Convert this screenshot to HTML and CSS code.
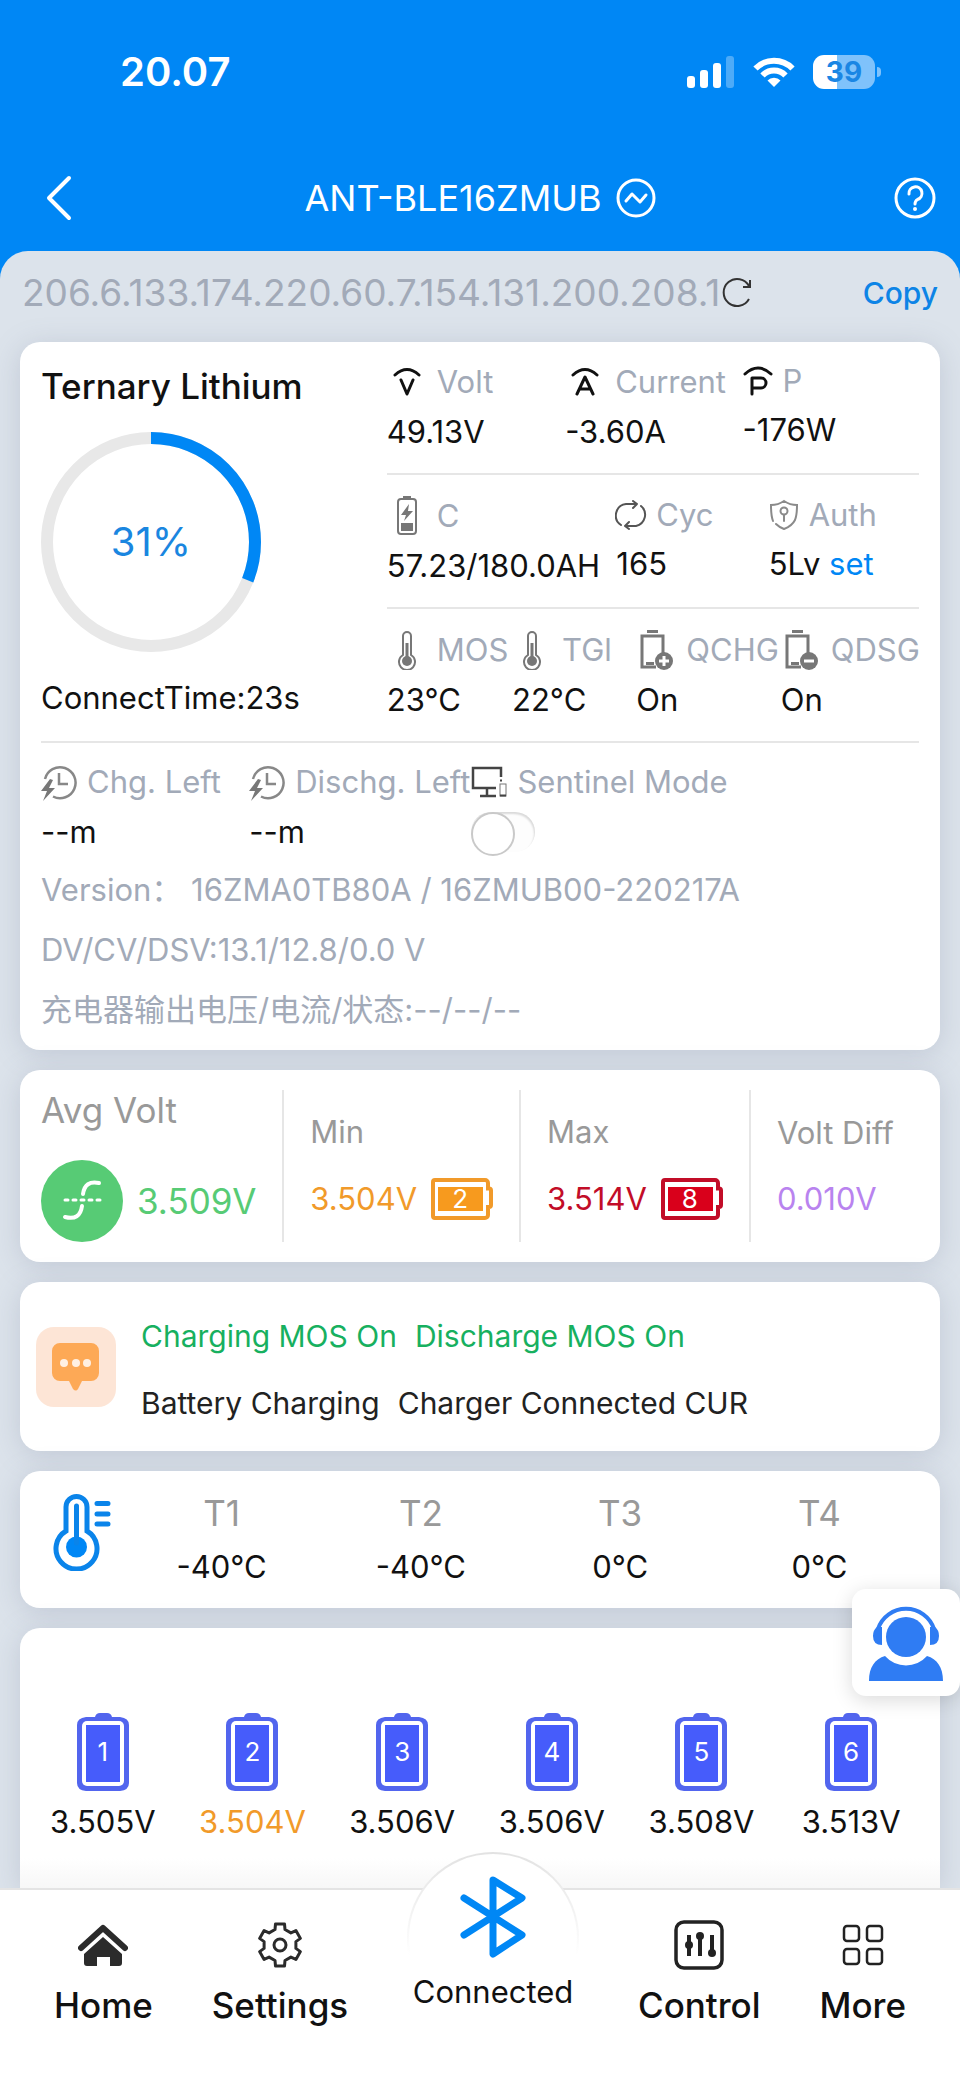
FILE: index.html
```html
<!DOCTYPE html>
<html lang="en">
<head>
<meta charset="utf-8">
<meta name="viewport" content="width=device-width, initial-scale=1">
<title>ANT-BLE16ZMUB</title>
<link rel="stylesheet" href="styles.css">
</head>
<body>
<svg class="defs" aria-hidden="true">
  <symbol id="thermo" viewBox="0 0 20 40">
    <path d="M6 25V6a4 4 0 0 1 8 0v19a8 8 0 1 1-8 0z" fill="none" stroke="#777" stroke-width="2"/>
    <circle cx="10" cy="31" r="5" fill="#777"/><path d="M10 31V13" stroke="#777" stroke-width="3"/>
  </symbol>
  <symbol id="clock" viewBox="0 0 36 36">
    <path d="M4 15A15.500 15.500 0 1 1 12 32.500" fill="none" stroke="#888" stroke-width="2.500"/>
    <path d="M18 9v11h9" fill="none" stroke="#888" stroke-width="2.500"/>
    <path d="M9 15L0 27h6L2 37 14 24H8L12 16z" fill="#777"/>
  </symbol>
  <symbol id="cell" viewBox="0 0 52 78">
    <path d="M18 4Q19 0 23 0H30Q34 0 35 4H43Q52 5 52 12V70Q52 77 43 78H9Q0 77 0 70V12Q0 5 9 4z" fill="#5265ee"/>
    <rect x="5" y="8" width="42" height="65" rx="5" fill="#fff"/>
    <rect x="9" y="12" width="34" height="57" fill="#465cfb"/>
  </symbol>
  <symbol id="flat-cell" viewBox="0 0 62 42">
    <path d="M4 2H54a3 3 0 0 1 3 3V10.500H58a2 2 0 0 1 2 2V27a2 2 0 0 1-2 2H57V37a3 3 0 0 1-3 3H4a2 2 0 0 1-2-2V4a2 2 0 0 1 2-2z" fill="#fff" stroke="currentColor" stroke-width="4"/>
    <rect class="flat-fill" x="7" y="9" width="45" height="24"/>
  </symbol>
</svg>

<div class="app">
  <header class="header">
    <div class="status">
      <span class="time">20.07</span>
      <div class="status-icons">
        <svg width="48" height="32" viewBox="0 0 48 32" fill="#fff"><rect x="0" y="20" width="8" height="12" rx="3"/><rect x="13" y="14" width="8" height="18" rx="3"/><rect x="26" y="7" width="8" height="25" rx="3"/><rect x="39" y="0" width="8" height="32" rx="3" opacity=".3"/></svg>
        <svg width="42" height="32" viewBox="0 0 42 32" fill="none" stroke="#fff" stroke-width="6"><path d="M2.500 12.500A26 26 0 0 1 39.500 12.500"/><path d="M9.500 19.500A16 16 0 0 1 32.500 19.500"/><path d="M21 31L14.500 24.500A9 9 0 0 1 27.500 24.500z" fill="#fff" stroke="none"/></svg>
        <div class="battery"><span class="battery-level">39</span></div>
      </div>
    </div>
    <div class="titlebar">
      <button class="icon-btn start" aria-label="Back"><svg width="28" height="46" viewBox="0 0 28 46"><path d="M25 3L5 23L25 43" fill="none" stroke="#fff" stroke-width="4" stroke-linecap="round" stroke-linejoin="round"/></svg></button>
      <h1 class="title">ANT-BLE16ZMUB
        <svg width="40" height="40" viewBox="0 0 40 40" fill="none" stroke="#fff" stroke-width="3"><circle cx="20" cy="20" r="18"/><path d="M10 23L16 16L24 24L30 17" stroke-linecap="round" stroke-linejoin="round"/></svg></h1>
      <button class="icon-btn end" aria-label="Help"><svg width="42" height="42" viewBox="0 0 42 42" fill="none" stroke="#fff" stroke-width="3"><circle cx="21" cy="21" r="19"/><path d="M15 17A6.500 6.500 0 1 1 23.500 22.500Q21 24 21 27" stroke-linecap="round"/><circle cx="21" cy="32" r="2" fill="#fff" stroke="none"/></svg></button>
    </div>
  </header>

  <main class="panel">
    <div class="device-id">
      <span class="id-text">206.6.133.174.220.60.7.154.131.200.208.1</span>
      <button class="icon-btn" aria-label="Refresh"><svg width="34" height="32" viewBox="0 0 34 32"><path d="M29 22A13.500 13.500 0 1 1 29 9M30 3V10H23" fill="none" stroke="#333" stroke-width="2"/></svg></button>
      <button class="copy">Copy</button>
    </div>

    <section class="card overview">
      <div class="top">
        <div class="charge">
          <h2 class="heading">Ternary Lithium</h2>
          <div class="ring">
            <svg width="220" height="220" viewBox="0 0 220 220" fill="none" stroke-width="12"><circle cx="110" cy="110" r="104" stroke="#e8e8e8"/><circle cx="110" cy="110" r="104" stroke="#0087f5" pathLength="100" stroke-dasharray="31 69" transform="rotate(-90 110 110)"/></svg>
            <span class="percent">31%</span>
          </div>
          <p class="value">ConnectTime:23s</p>
        </div>
        <div class="metrics">
          <div class="row row-a">
            <div class="metric"><div class="label"><span class="ico"><svg width="30" height="30" viewBox="0 0 30 30" fill="none" stroke="#111" stroke-width="3" stroke-linecap="round" stroke-linejoin="round"><path d="M3 8Q15-3 27 8M9 13L15 27L21 13"/></svg></span>Volt</div><div class="value">49.13V</div></div>
            <div class="metric"><div class="label"><span class="ico"><svg width="30" height="30" viewBox="0 0 30 30" fill="none" stroke="#111" stroke-width="3" stroke-linecap="round" stroke-linejoin="round"><path d="M3 8Q15-3 27 8M7 27L15 10L23 27M10 22H20"/></svg></span>Current</div><div class="value">-3.60A</div></div>
            <div class="metric compact"><div class="label"><span class="ico"><svg width="30" height="30" viewBox="0 0 30 30" fill="none" stroke="#111" stroke-width="3" stroke-linecap="round" stroke-linejoin="round"><path d="M2 8Q15-4 28 8M9 28V12H18A5 5 0 0 1 18 22H9"/></svg></span>P</div><div class="value">-176W</div></div>
          </div>
          <div class="row row-b">
            <div class="metric"><div class="label"><span class="ico"><svg width="22" height="40" viewBox="0 0 22 40"><rect x="2" y="3" width="18" height="35" rx="3" fill="none" stroke="#777" stroke-width="2"/><path d="M7 0h8v3H7zM5 27h12v8H5zM13 8L5 19h5L8 25L17 15h-5z" fill="#777"/></svg></span>C</div><div class="value">57.23/180.0AH</div></div>
            <div class="metric compact"><div class="label"><span class="ico"><svg width="32" height="30" viewBox="0 0 32 30" fill="none" stroke="#555" stroke-width="2" stroke-linecap="round" stroke-linejoin="round"><path d="M6 25A11.500 11.500 0 0 1 11 4H22M18 1L22 4L18 8M26 6A11.500 11.500 0 0 1 21 26H10M14 22L10 26L14 29"/></svg></span>Cyc</div><div class="value">165</div></div>
            <div class="metric compact"><div class="label"><span class="ico"><svg width="28" height="32" viewBox="0 0 28 32" fill="none" stroke="#8a8a8a" stroke-width="2" stroke-linecap="round"><path d="M3 22Q1 17 1 6Q8 6 14 2Q20 6 27 6Q27 16 25 21Q22 27 14 30Q9 28 6 25"/><circle cx="14" cy="12" r="3.500"/><path d="M14 16V22"/></svg></span>Auth</div><div class="value">5Lv <a class="link" href="#auth">set</a></div></div>
          </div>
          <div class="row row-c">
            <div class="metric"><div class="label"><span class="ico"><svg width="20" height="40"><use href="#thermo"/></svg></span>MOS</div><div class="value">23°C</div></div>
            <div class="metric"><div class="label"><span class="ico"><svg width="20" height="40"><use href="#thermo"/></svg></span>TGl</div><div class="value">22°C</div></div>
            <div class="metric"><div class="label"><span class="ico"><svg width="34" height="40" viewBox="0 0 34 40"><path d="M8 0h11v3H8zM7 32h8v3H7z" fill="#777"/><path d="M17 37H3V6H24V23" fill="none" stroke="#777" stroke-width="3"/><circle cx="25" cy="31" r="9" fill="#777"/><path d="M25 26V36M20 31H30" stroke="#fff" stroke-width="3"/></svg></span>QCHG</div><div class="value">On</div></div>
            <div class="metric"><div class="label"><span class="ico"><svg width="34" height="40" viewBox="0 0 34 40"><path d="M8 0h11v3H8zM7 32h8v3H7z" fill="#777"/><path d="M17 37H3V6H24V23" fill="none" stroke="#777" stroke-width="3"/><circle cx="25" cy="31" r="9" fill="#777"/><path d="M20 31H30" stroke="#fff" stroke-width="3"/></svg></span>QDSG</div><div class="value">On</div></div>
          </div>
        </div>
      </div>
      <div class="bottom">
        <div class="metric"><div class="label"><svg width="36" height="38"><use href="#clock"/></svg>Chg. Left</div><div class="value">--m</div></div>
        <div class="metric"><div class="label"><svg width="36" height="38"><use href="#clock"/></svg>Dischg. Left</div><div class="value">--m</div></div>
        <div class="metric"><label class="label" for="sentinel"><svg width="36" height="32" viewBox="0 0 36 32" fill="none" stroke="#444" stroke-width="2.500"><path d="M30 11V2H2V22H25M16 22V29M9 30H25"/><rect x="29" y="18" width="6" height="12" stroke="#777" stroke-width="1"/><path d="M29 29.500H35M29 14.500H31" stroke-width="2"/></svg>Sentinel Mode</label><input class="toggle" id="sentinel" type="checkbox"></div>
      </div>
      <p class="info">Version： 16ZMA0TB80A / 16ZMUB00-220217A</p>
      <p class="info">DV/CV/DSV:13.1/12.8/0.0 V</p>
      <p class="info" lang="zh-CN">充电器输出电压/电流/状态:--/--/--</p>
    </section>

    <section class="card volts">
      <div class="volt avg">
        <h2 class="heading muted">Avg Volt</h2>
        <div class="reading green">
          <svg width="82" height="82" viewBox="0 0 82 82" fill="none" stroke="#fff" stroke-width="4" stroke-linecap="round"><circle cx="41" cy="41" r="41" fill="#57cb75" stroke="none"/><path d="M24 57Q39 61 41 46M42 34Q44 20 58 23"/><path d="M24 40H59" stroke-dasharray="3 5" stroke-width="3"/></svg>
          3.509V</div>
      </div>
      <div class="volt"><div class="muted">Min</div><div class="reading amber">3.504V <span class="flat"><svg width="62" height="42"><use href="#flat-cell"/></svg><span class="num">2</span></span></div></div>
      <div class="volt"><div class="muted">Max</div><div class="reading red">3.514V <span class="flat"><svg width="62" height="42"><use href="#flat-cell"/></svg><span class="num">8</span></span></div></div>
      <div class="volt"><div class="muted">Volt Diff</div><div class="reading violet">0.010V</div></div>
    </section>

    <section class="card messages">
      <svg class="msg-icon" width="80" height="80" viewBox="0 0 80 80"><rect width="80" height="80" rx="18" fill="#fde5d6"/><path d="M24 16H55a8 8 0 0 1 8 8V46a8 8 0 0 1-8 8H46L42 62Q40 65 37 62L33 54H24a8 8 0 0 1-8-8V24a8 8 0 0 1 8-8z" fill="#fda956"/><g fill="#fff0e2"><circle cx="28" cy="36" r="4"/><circle cx="40" cy="36" r="4"/><circle cx="51" cy="36" r="4"/></g></svg>
      <div class="msg-lines">
        <p class="ok"><span>Charging MOS On</span><span>Discharge MOS On</span></p>
        <p><span>Battery Charging</span><span>Charger Connected CUR</span></p>
      </div>
    </section>

    <section class="card temps">
      <svg class="temp-icon" width="58" height="78" viewBox="0 0 58 78"><path d="M13 38V14a10.500 10.500 0 0 1 21 0V38A20.500 20.500 0 1 1 13 38z" fill="none" stroke="#0a84ea" stroke-width="5"/><circle cx="23.500" cy="54" r="10.500" fill="#0087f5"/><path d="M23.500 50V13" stroke="#0a84ea" stroke-width="5" stroke-linecap="round"/><path d="M44 10.500H55M44 21H55M44 31H55" stroke="#0a84ea" stroke-width="5" stroke-linecap="round"/></svg>
      <div class="temp"><span class="heading muted">T1</span><span>-40°C</span></div>
      <div class="temp"><span class="heading muted">T2</span><span>-40°C</span></div>
      <div class="temp"><span class="heading muted">T3</span><span>0°C</span></div>
      <div class="temp"><span class="heading muted">T4</span><span>0°C</span></div>
    </section>

    <section class="card cells">
      <div class="cell"><div class="cell-body"><svg width="52" height="78"><use href="#cell"/></svg><span class="num">1</span></div><span>3.505V</span></div>
      <div class="cell"><div class="cell-body"><svg width="52" height="78"><use href="#cell"/></svg><span class="num">2</span></div><span class="amber">3.504V</span></div>
      <div class="cell"><div class="cell-body"><svg width="52" height="78"><use href="#cell"/></svg><span class="num">3</span></div><span>3.506V</span></div>
      <div class="cell"><div class="cell-body"><svg width="52" height="78"><use href="#cell"/></svg><span class="num">4</span></div><span>3.506V</span></div>
      <div class="cell"><div class="cell-body"><svg width="52" height="78"><use href="#cell"/></svg><span class="num">5</span></div><span>3.508V</span></div>
      <div class="cell"><div class="cell-body"><svg width="52" height="78"><use href="#cell"/></svg><span class="num">6</span></div><span>3.513V</span></div>
    </section>
  </main>

  <nav class="tabs">
    <button class="tab"><span class="tab-icon"><svg width="50" height="42" viewBox="0 0 50 42"><path d="M3 24L25 4L47 24" fill="none" stroke="#2b2b2b" stroke-width="6" stroke-linecap="round" stroke-linejoin="round"/><path d="M25 13L44 30V39q0 3-3 3H32V33H19V42H9q-3 0-3-3V30z" fill="#2b2b2b"/></svg></span>Home</button>
    <button class="tab"><span class="tab-icon"><svg width="48" height="48" viewBox="-24 -24 48 48" fill="none" stroke="#2b2b2b" stroke-width="3" stroke-linejoin="round"><path d="M-5-15.500L-4.500-21H4.500L5-15.500L10.900-12.100L15.900-14.400L20.400-6.600L15.900-3.400V3.400L20.400 6.600L15.900 14.400L10.900 12.100L5 15.500L4.500 21H-4.500L-5 15.500L-10.900 12.100L-15.900 14.400L-20.400 6.600L-15.900 3.400V-3.400L-20.400-6.600L-15.900-14.400L-10.900-12.100z"/><circle r="6"/></svg></span>Settings</button>
    <button class="tab connected"><svg width="66" height="82" viewBox="0 0 66 82" fill="none" stroke="#0087f5" stroke-width="7" stroke-linecap="round" stroke-linejoin="round"><path d="M4 22L62 59L33 78V4L62 22L4 59"/></svg><span>Connected</span></button>
    <button class="tab"><span class="tab-icon"><svg width="50" height="50" viewBox="0 0 50 50" fill="none" stroke="#222" stroke-width="3.500"><rect x="2" y="2" width="46" height="46" rx="8"/><path d="M15 15V36M26 15V36M38 15V36" stroke-width="4"/><g fill="#222" stroke="none"><circle cx="15" cy="25" r="4"/><circle cx="26" cy="16" r="4"/><circle cx="38" cy="33" r="4"/></g></svg></span>Control</button>
    <button class="tab"><span class="tab-icon"><svg width="42" height="42" viewBox="0 0 42 42" fill="none" stroke="#222" stroke-width="2.500"><rect x="2" y="2" width="15" height="15" rx="3"/><rect x="25" y="2" width="15" height="15" rx="3"/><rect x="2" y="25" width="15" height="15" rx="3"/><rect x="25" y="25" width="15" height="15" rx="3"/></svg></span>More</button>
  </nav>

  <button class="support" aria-label="Customer support"><svg width="74" height="76" viewBox="0 0 74 76" fill="#2f7cf3"><circle cx="37" cy="32" r="20"/><path d="M9 24A29.500 29.500 0 0 1 65 24" fill="none" stroke="#2f7cf3" stroke-width="4"/><path d="M13 22V40Q4 40 4 31Q4 25 8 22zM61 22V40Q70 40 70 31Q70 25 66 22z"/><path d="M0 76C0 62 6 54 16 51A28 28 0 0 0 58 51C68 54 74 62 74 76z"/></svg></button>
</div>
</body>
</html>
```
FILE: styles.css
```css
* { box-sizing: border-box; }
body {
  margin: 0;
  background: #0087f5;
  color: #111;
  font-family: Inter, "Noto Sans CJK SC", sans-serif;
  font-size: 31px;
  line-height: 40px;
}
h1, h2, p { margin: 0; font-weight: 400; }
svg { display: block; flex: none; }
.defs { position: absolute; width: 0; height: 0; }
button {
  border: 0;
  padding: 0;
  background: none;
  color: inherit;
  font: inherit;
  cursor: pointer;
}
.app { position: relative; display: flex; flex-direction: column; min-height: 100vh; }

.header { color: #fff; }
.status {
  display: flex;
  align-items: center;
  justify-content: space-between;
  height: 144px;
  padding: 0 85px 0 120px;
}
.time { font-size: 40px; font-weight: 600; }
.status-icons { display: flex; align-items: center; gap: 18px; }
.battery {
  position: relative;
  width: 62px;
  height: 34px;
  border-radius: 11px;
  background: linear-gradient(90deg, #fff 39%, #7fc2fb 39%);
}
.battery::after {
  content: "";
  position: absolute;
  left: 64px;
  top: 12px;
  width: 4px;
  height: 10px;
  border-radius: 0 4px 4px 0;
  background: #7fc2fb;
}
.battery-level {
  display: block;
  text-align: center;
  color: #1a86e4;
  font-size: 28px;
  font-weight: 700;
  line-height: 34px;
}
.titlebar {
  display: grid;
  grid-template-columns: 1fr auto 1fr;
  align-items: center;
  height: 107px;
  padding: 0 24px;
}
.title { display: flex; align-items: center; gap: 14px; font-size: 36px; }
.icon-btn.start { justify-self: start; padding-left: 20px; }
.icon-btn.end { justify-self: end; }

.panel {
  flex: 1;
  display: flex;
  flex-direction: column;
  gap: 20px;
  padding: 0 20px;
  border-radius: 28px 28px 0 0;
  background: #dce3eb;
}
.device-id { display: flex; align-items: center; padding: 22px 2px 9px; color: #a2aab8; }
.id-text { font-size: 37px; }
.copy { margin-left: auto; color: #0d84e6; font-size: 30px; font-weight: 500; }

.card {
  border-radius: 20px;
  background: #fff;
  box-shadow: 0 4px 28px rgba(120, 128, 155, .26);
}
.heading { font-size: 35px; }
.muted { color: #999; }
.green { color: #57cb75; }
.amber { --fill: #f79a1e; color: #f19a2a; }
.red { --fill: #d9001b; color: #c20d28; }
.violet { color: #b983ef; }

.overview { padding: 20px 21px 10px; }
.top { display: grid; grid-template-columns: 345fr 531fr; }
.charge { display: flex; flex-direction: column; align-items: flex-start; gap: 26px; padding-top: 4px; }
.charge .heading { font-weight: 500; }
.ring { display: grid; place-items: center; }
.ring > * { grid-area: 1 / 1; }
.percent { color: #1a86e0; font-size: 40px; }
.row { display: grid; padding-bottom: 21px; }
.row + .row { padding-top: 21px; border-top: 2px solid #e6e6e6; }
.row-a { grid-template-columns: 178fr 177fr 176fr; }
.row-b { grid-template-columns: 229fr 152fr 150fr; }
.row-c { grid-template-columns: 125fr 124fr 144fr 138fr; }
.metric { display: flex; flex-direction: column; gap: 10px; min-width: 0; white-space: nowrap; }
.label { display: flex; align-items: center; gap: 10px; height: 40px; color: #a2aab8; }
.ico { display: flex; justify-content: center; flex: none; width: 40px; }
.compact .label { height: 38px; }
.compact .ico { width: 30px; }
.link { color: #0087f5; text-decoration: none; }
.bottom {
  display: grid;
  grid-template-columns: 208fr 222fr 447fr;
  padding: 19px 0 8px;
  border-top: 2px solid #e6e6e6;
}
.toggle {
  appearance: none;
  width: 64px;
  height: 40px;
  margin: 0;
  border-radius: 20px;
  background: #fdfdfd;
  box-shadow: inset -1px 2px 2px rgba(0, 0, 0, .14);
}
.toggle::before {
  content: "";
  display: block;
  width: 40px;
  height: 40px;
  border: 2px solid #c9c9c9;
  border-radius: 50%;
  background: #fff;
}
.toggle:checked { background: #0087f5; }
.toggle:checked::before { margin-left: 24px; }
.info { color: #a2aab8; line-height: 60px; }

.volts { display: flex; padding: 20px 21px; }
.volt {
  display: flex;
  flex-direction: column;
  justify-content: center;
  gap: 26px;
  height: 152px;
  padding: 0 26px;
  border-right: 2px solid #e6e6e6;
  white-space: nowrap;
}
.volt:last-child { border-right: 0; padding-right: 0; }
.avg { justify-content: space-between; gap: 0; padding-left: 0; }
.reading { display: flex; align-items: center; gap: 14px; }
.avg .reading { font-size: 35px; }
.flat { display: grid; place-items: center; }
.flat > * { grid-area: 1 / 1; }
.flat .num { margin-right: 4px; }
.flat-fill { fill: var(--fill); }
.num { color: #fff; font-size: 26px; line-height: 40px; }

.messages { display: flex; align-items: center; gap: 25px; padding: 18px 16px; font-size: 30px; }
.msg-lines { display: flex; flex-direction: column; gap: 27px; padding: 16px 0 10px; color: #222; }
.msg-lines p { display: flex; flex-wrap: wrap; column-gap: 18px; }
.msg-lines .ok { color: #17b05f; }

.temps { display: grid; grid-template-columns: 69px repeat(4, 1fr); align-items: start; padding: 22px 21px 21px 33px; }
.temp { display: flex; flex-direction: column; gap: 14px; align-items: center; }

.cells {
  flex: 1;
  display: grid;
  grid-template-columns: repeat(6, 1fr);
  align-content: start;
  padding: 85px 14px 40px 8px;
  border-radius: 20px 20px 0 0;
  background: linear-gradient(0deg, #f7f7f7, #fff 30px);
}
.cell { display: flex; flex-direction: column; align-items: center; gap: 11px; }
.cell-body { display: grid; place-items: center; }
.cell-body > * { grid-area: 1 / 1; }

.tabs {
  display: flex;
  justify-content: space-between;
  height: 193px;
  padding: 0 54px;
  border-top: 2px solid #e4e4e4;
  background: #fff;
}
.tab { display: flex; flex-direction: column; align-items: center; font-size: 35px; font-weight: 500; padding-top: 30px; }
.tab-icon { display: grid; place-items: center; height: 50px; margin-bottom: 15px; }
.connected {
  width: 172px;
  height: 172px;
  margin-top: -38px;
  padding-top: 22px;
  border-radius: 50%;
  background: linear-gradient(#fff, #fff) padding-box, linear-gradient(#e2e2e2, #fff 60%) border-box;
  border: 2px solid transparent;
  gap: 14px;
  font-size: 31px;
  font-weight: 400;
}
.support {
  position: absolute;
  right: 0;
  bottom: 385px;
  display: grid;
  place-items: center;
  width: 108px;
  height: 107px;
  border-radius: 14px;
  background: #fff;
  box-shadow: 0 4px 20px rgba(0, 0, 0, .15);
}
```
